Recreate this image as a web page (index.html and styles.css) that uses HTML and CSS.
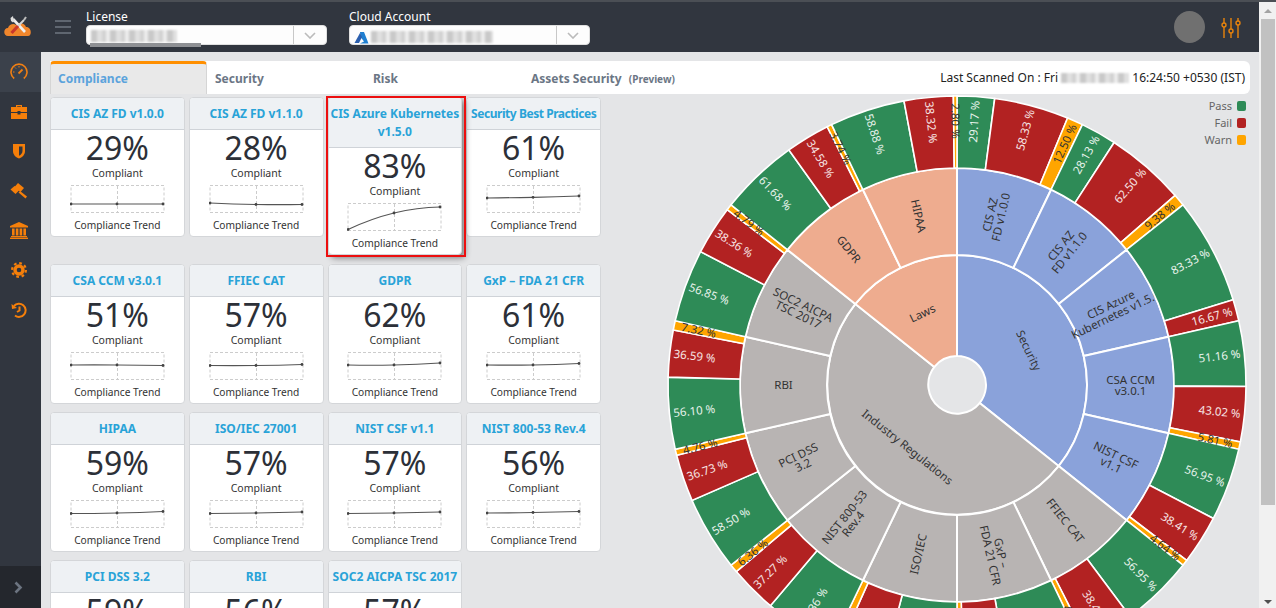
FILE: index.html
```html
<!DOCTYPE html>
<html lang="en">
<head>
    <meta charset="UTF-8">
    <meta name="viewport" content="width=device-width, initial-scale=1.0">
    <title>Compliance Dashboard</title>
    <link rel="stylesheet" href="styles.css">
</head>
<body>
    <div class="frame">
        <div class="header">
            <div class="logo">
                <svg width="28" height="22" viewBox="0 0 28 22">
                    <path d="M4 21 C-1 21 -1 13 4 13 C5 9 10 8 12 10 C15 7 21 8 22 12 C28 12 28 21 24 21 Z" fill="#f0862c"/>
                    <path d="M9 4 L21 17" stroke="#efefef" stroke-width="2.6"/>
                    <path d="M6.5 3 L9 1 L9.5 4 L11.5 5 L9 7.5 L7 6 Z" fill="#dedede"/>
                    <path d="M20 5 L13 12" stroke="#d5d5d5" stroke-width="2"/>
                    <path d="M14 11 L7.5 18" stroke="#c9372c" stroke-width="3.2"/>
                    <path d="M20 5 L22 2" stroke="#bdbdbd" stroke-width="2"/>
                </svg>
            </div>
            <div class="burger"><span></span><span></span><span></span></div>
            <div class="field license">
                <label>License</label>
                <div class="select">
                    <div class="select-value"><span class="redact redact-license"></span></div>
                    <div class="select-arrow"><svg width="12" height="7" viewBox="0 0 12 7"><path d="M1 1 L6 6 L11 1" fill="none" stroke="#bbb" stroke-width="1.6"/></svg></div>
                </div>
                <span class="redact-under"></span>
            </div>
            <div class="field account">
                <label>Cloud Account</label>
                <div class="select">
                    <div class="select-value">
                        <svg class="azure" width="15" height="12" viewBox="0 0 15 12"><path d="M6 0 L10 0 L14.5 11.5 L6 11.5 L10 9.5 L6.5 5 Z" fill="#1f7fd1"/><path d="M6 1 L0.5 11 L5 11 L8 5 Z" fill="#2b5fae"/></svg>
                        <span class="redact redact-account"></span>
                    </div>
                    <div class="select-arrow"><svg width="12" height="7" viewBox="0 0 12 7"><path d="M1 1 L6 6 L11 1" fill="none" stroke="#bbb" stroke-width="1.6"/></svg></div>
                </div>
            </div>
            <div class="header-right">
                <div class="avatar"></div>
                <svg width="20" height="20" viewBox="0 0 20 20" fill="none" stroke="#e8830c" stroke-width="1.4">
                    <path d="M3 0 V5 M3 9 V20 M10 0 V11 M10 15 V20 M17 0 V3 M17 7 V20"/>
                    <circle cx="3" cy="7" r="2"/><circle cx="10" cy="13" r="2"/><circle cx="17" cy="5" r="2"/>
                </svg>
            </div>
        </div>
        <div class="below">
            <div class="sidebar">
                <div class="side-item active">
                    <svg width="18" height="18" viewBox="0 0 18 18" fill="none" stroke="#f07f13" stroke-width="1.6"><path d="M4.2 15.5 A8 8 0 1 1 13.8 15.5"/><path d="M8.5 10.5 L12.5 6.5" stroke-width="1.8"/><path d="M3 9 H4.5 M5 4.5 L6 5.5 M9 3 V4.5" stroke-width="1"/></svg>
                </div>
                <div class="side-item">
                    <svg width="18" height="16" viewBox="0 0 18 16" fill="#f57f0a"><path d="M6 3 V1 H12 V3 H10.8 V2.2 H7.2 V3 Z"/><path d="M1 3 H17 V8 H10.5 V7 H7.5 V8 H1 Z"/><path d="M1 9 H7.5 V10.5 H10.5 V9 H17 V15 H1 Z"/></svg>
                </div>
                <div class="side-item">
                    <svg width="14" height="16" viewBox="0 0 14 16"><path d="M1 1 H13 V8 C13 12 10 14.5 7 15.5 C4 14.5 1 12 1 8 Z" fill="#f57f0a"/><path d="M7 3.5 H10.5 V8 C10.5 10 9 11.8 7 12.8 Z" fill="#31363f"/></svg>
                </div>
                <div class="side-item">
                    <svg width="18" height="17" viewBox="0 0 18 17" fill="#f57f0a"><path d="M8 1 L14 6 L10.5 10 L4.5 5 Z"/><path d="M1 8.5 L5 5 L10 9 L6 13 Z" transform="translate(-0.5 -1)"/><path d="M10 9 L17 14.5 L15.5 16.5 L8.5 10.5 Z"/></svg>
                </div>
                <div class="side-item">
                    <svg width="18" height="17" viewBox="0 0 18 17" fill="#f57f0a"><path d="M9 0 L18 4 V5.5 H0 V4 Z"/><rect x="2" y="6.5" width="2.6" height="7"/><rect x="5.8" y="6.5" width="2.6" height="7"/><rect x="9.6" y="6.5" width="2.6" height="7"/><rect x="13.4" y="6.5" width="2.6" height="7"/><rect x="1" y="14" width="16" height="1.2"/><rect x="0" y="15.6" width="18" height="1.4"/></svg>
                </div>
                <div class="side-item">
                    <svg width="16" height="16" viewBox="0 0 16 16"><circle cx="8" cy="8" r="6.9" fill="none" stroke="#f57f0a" stroke-width="2.2" stroke-dasharray="2.7 2.72"/><circle cx="8" cy="8" r="4" fill="none" stroke="#f57f0a" stroke-width="3.4"/></svg>
                </div>
                <div class="side-item">
                    <svg width="16" height="16" viewBox="0 0 16 16" fill="none" stroke="#f57f0a" stroke-width="2"><path d="M3 4 A6.6 6.6 0 1 1 4 13.5"/><path d="M8.5 4.5 V8.5 L6 10"/><path d="M0.5 2 L6 6 L1 7 Z" fill="#f57f0a" stroke="none"/></svg>
                </div>
                <div class="side-toggle">
                    <svg width="9" height="13" viewBox="0 0 9 13"><path d="M1.5 1.5 L6.5 6.5 L1.5 11.5" fill="none" stroke="#6c7480" stroke-width="2.6"/></svg>
                </div>
            </div>
            <div class="main">
                <div class="tabs">
                    <div class="tab active">Compliance</div>
                    <div class="tab">Security</div>
                    <div class="tab">Risk</div>
                    <div class="tab tab-wide">Assets Security <small>(Preview)</small></div>
                    <div class="scanned">Last Scanned On : Fri <span class="redact redact-date"></span> 16:24:50 +0530 (IST)</div>
                </div>
                <div class="content">
                    <div class="cards" id="cards"></div>
                    <div class="chart">
                        <svg id="sunburst" width="580" height="580" viewBox="-290 -289 580 580"></svg>
                        <div class="legend">
                            <div class="legend-row">Pass <i class="pass"></i></div>
                            <div class="legend-row">Fail <i class="fail"></i></div>
                            <div class="legend-row">Warn <i class="warn"></i></div>
                        </div>
                    </div>
                </div>
            </div>
        </div>
    </div>
    <div class="scrollbar">
        <div class="arrow-up"></div>
        <div class="thumb"></div>
        <div class="arrow-down"></div>
    </div>
    <script src="chart.js"></script>
</body>
</html>
```

FILE: styles.css
```css
* {
    box-sizing: border-box;
}
html, body {
    height: 100%;
}
body {
    font-family: "Noto Sans", "Open Sans", sans-serif;
    margin: 0;
    padding: 0;
    display: flex;
    overflow: hidden;
    background: #e4e5e7;
    color: #333;
    border-top: 2px solid #4b4f55;
}
.frame {
    flex: 1;
    min-width: 0;
    display: flex;
    flex-direction: column;
    overflow: hidden;
}
.header {
    height: 50px;
    flex-shrink: 0;
    background: #31363f;
    display: flex;
    color: #fff;
    position: relative;
}
.logo {
    width: 41px;
    padding: 13px 0 0 4px;
}
.burger {
    width: 45px;
    padding: 18px 0 0 14px;
}
.burger span {
    display: block;
    width: 16px;
    height: 2px;
    background: #5f6670;
    margin-bottom: 4px;
}
.field {
    width: 241px;
    position: relative;
}
.account {
    margin-left: 22px;
}
.field label {
    display: block;
    font-size: 12px;
    line-height: 14px;
    padding-top: 8px;
    height: 23px;
}
.select {
    height: 20px;
    background: #fdfdfd;
    border-radius: 4px;
    display: flex;
    border: 1px solid #e0e0e0;
}
.select-value {
    flex: 1;
    padding: 3px 0 0 4px;
    display: flex;
    align-items: flex-start;
}
.select-arrow {
    width: 33px;
    border-left: 1px solid #c8c8c8;
    display: flex;
    align-items: center;
    justify-content: center;
}
.azure {
    margin-top: 3px;
    margin-right: 2px;
}
.redact {
    display: inline-block;
    height: 12px;
    background: repeating-linear-gradient(90deg, #c9c9c9 0 6px, #e0e0e0 6px 11px, #d2d2d2 11px 15px, #ececec 15px 19px);
    filter: blur(0.8px);
}
.redact-license {
    width: 86px;
    margin-top: 1px;
}
.redact-account {
    width: 122px;
    margin-top: 2px;
}
.redact-date {
    width: 68px;
    height: 10px;
    vertical-align: -1px;
}
.redact-under {
    position: absolute;
    left: 4px;
    top: 41px;
    width: 111px;
    height: 4px;
    background: #8e9094;
}
.header-right {
    margin-left: auto;
    display: flex;
    align-items: flex-start;
    padding: 9px 18px 0 0;
}
.avatar {
    width: 31px;
    height: 32px;
    border-radius: 50%;
    background: #707070;
    margin-right: 16px;
}
.header-right svg {
    margin-top: 7px;
}
.below {
    flex: 1;
    display: flex;
    min-height: 0;
}
.sidebar {
    width: 41px;
    flex-shrink: 0;
    background: #31363f;
    display: flex;
    flex-direction: column;
    position: relative;
}
.side-item {
    height: 39.7px;
    padding-right: 4px;
    display: flex;
    align-items: center;
    justify-content: center;
}
.side-item.active {
    background: #3b414b;
}
.side-toggle {
    position: absolute;
    left: 0;
    right: 0;
    bottom: 0;
    height: 42px;
    padding-right: 4px;
    background: #24272d;
    display: flex;
    align-items: center;
    justify-content: center;
}
.main {
    flex: 1;
    min-width: 0;
    padding: 9px 9px 0 9px;
    overflow: hidden;
}
.tabs {
    height: 33px;
    background: #fff;
    border-radius: 0 6px 6px 0;
    display: flex;
    align-items: center;
    font-size: 12px;
    font-weight: bold;
    color: #6b7685;
}
.tab {
    width: 158px;
    height: 100%;
    padding: 9px 8px 0 8px;
    line-height: 17px;
    white-space: nowrap;
}
.tab.active {
    width: 157px;
    color: #5ba3dc;
    background: #e9e9e9;
    border-top: 3px solid #ff8f00;
    border-left: 1px solid #d5d5d5;
    border-right: 1px solid #d5d5d5;
    border-radius: 4px 4px 0 0;
    padding: 6px 0 0 7px;
}
.tab-wide {
    width: auto;
}
.tab-wide small {
    font-size: 10px;
    margin-left: 4px;
}
.scanned {
    margin-left: auto;
    padding-right: 5px;
    font-weight: normal;
    font-size: 12px;
    color: #222;
}
.content {
    display: flex;
    align-items: flex-start;
}
.cards {
    width: 551px;
    flex-shrink: 0;
    display: grid;
    grid-template-columns: repeat(4, minmax(0, 1fr));
    column-gap: 4px;
    row-gap: 8px;
    align-items: start;
    padding-top: 3px;
}
.card {
    background: #fff;
    border: 1px solid #d4d6d9;
    border-radius: 4px;
    text-align: center;
}
.card.flagged {
    position: relative;
    box-shadow: 3px 3px 6px rgba(0, 0, 0, 0.45);
    margin-bottom: 1px;
    z-index: 1;
}
/* red box drawn over the card */
.card.flagged::after {
    content: "";
    position: absolute;
    left: -3px;
    right: -5px;
    top: -2px;
    bottom: -3px;
    border: 2px solid #ec0f0f;
}
.card-title {
    background: #eef1f4;
    border-bottom: 1px solid #cfd3d8;
    border-radius: 3px 3px 0 0;
    color: #29a3d8;
    font-size: 12px;
    font-weight: bold;
    line-height: 18px;
    padding: 7px 0 6px;
    white-space: pre;
}
.card-title.tight {
    letter-spacing: -0.45px;
}
.card-pct {
    font-size: 32px;
    line-height: 35px;
    color: #2c3038;
}
.card-sub {
    font-size: 10.5px;
    line-height: 14px;
    margin-top: 1px;
}
.spark {
    display: block;
    margin: 5px auto;
}
.card-foot {
    font-size: 10.2px;
    line-height: 14px;
    padding-bottom: 4px;
}
.chart {
    margin-left: 66px;
    padding-top: 2px;
    position: relative;
}
#sunburst {
    display: block;
    overflow: visible;
}
#sunburst text {
    font-family: "Noto Sans", "Open Sans", sans-serif;
    font-size: 11.5px;
    text-anchor: middle;
}
.legend {
    position: absolute;
    top: 3px;
    right: 1px;
    font-size: 11px;
    color: #666;
}
.legend-row {
    height: 17px;
    display: flex;
    justify-content: flex-end;
    align-items: center;
}
.legend-row i {
    width: 9px;
    height: 10px;
    border-radius: 2px;
    margin-left: 5px;
}
.pass { background: #2e8b57; }
.fail { background: #b22222; }
.warn { background: #ffa500; }
.scrollbar {
    width: 17px;
    flex-shrink: 0;
    background: #f1f1f1;
    display: flex;
    flex-direction: column;
    align-items: center;
    padding-top: 7px;
    position: relative;
}
.arrow-up {
    border: 4px solid transparent;
    border-bottom: 4px solid #a3a3a3;
    border-top: 0;
}
.thumb {
    width: 14px;
    height: 486px;
    margin-top: 6px;
    background: #c1c1c1;
}
.arrow-down {
    position: absolute;
    bottom: 4px;
    border: 4px solid transparent;
    border-top: 4px solid #505050;
    border-bottom: 0;
}
```

FILE: chart.js
```js
// cards on the left
const cards = [
    { t: 'CIS AZ FD v1.0.0', v: 29, p: [19, 19, 19] },
    { t: 'CIS AZ FD v1.1.0', v: 28, p: [18, 19.5, 19.5] },
    { t: 'CIS Azure Kubernetes\nv1.5.0', v: 83, p: [26.5, 10, 4], flagged: true },
    { t: 'Security Best Practices', v: 61, p: [13, 12.3, 11], tight: true },
    { t: 'CSA CCM v3.0.1', v: 51, p: [13, 13, 13.5] },
    { t: 'FFIEC CAT', v: 57, p: [13.5, 13.5, 12.5] },
    { t: 'GDPR', v: 62, p: [13, 13, 11] },
    { t: 'GxP \u2013 FDA 21 CFR', v: 61, p: [13, 13, 11.5] },
    { t: 'HIPAA', v: 59, p: [13.5, 13, 11.5] },
    { t: 'ISO/IEC 27001', v: 57, p: [13.5, 13, 12] },
    { t: 'NIST CSF v1.1', v: 57, p: [13.5, 13, 12] },
    { t: 'NIST 800-53 Rev.4', v: 56, p: [13, 12.5, 11.5] },
    { t: 'PCI DSS 3.2', v: 59, p: [13, 13, 12] },
    { t: 'RBI', v: 56, p: [13, 13, 12] },
    { t: 'SOC2 AICPA TSC 2017', v: 57, p: [13, 13, 12] }
];

function spark(p) {
    let xs = [1, 47, 93];
    let dots = xs.map((x, i) => `<circle cx="${x}" cy="${p[i]}" r="1.4" fill="#444"/>`).join('');
    // smoothed line through the three points, slope at the middle one is the average
    let s = (p[2] - p[0]) / 4;
    let line = `M1 ${p[0]} Q24 ${p[1] - s} 47 ${p[1]} Q70 ${p[1] + s} 93 ${p[2]}`;
    return `<svg class="spark" width="95" height="28" viewBox="0 0 95 28">
        <path d="M1 .5H94V27.5H1ZM47.5 1V27" fill="none" stroke="#ccc" stroke-dasharray="3 2"/>
        <path d="${line}" fill="none" stroke="#555" stroke-width="1.2"/>${dots}</svg>`;
}

document.getElementById('cards').innerHTML = cards.map(c => `
    <div class="card${c.flagged ? ' flagged' : ''}">
        <div class="card-title${c.tight ? ' tight' : ''}">${c.t}</div>
        <div class="card-pct">${c.v}%</div>
        <div class="card-sub">Compliant</div>
        ${spark(c.p)}
        <div class="card-foot">Compliance Trend</div>
    </div>`).join('');

// sunburst on the right
const R0 = 29, R1 = 130, R2 = 217, R3 = 289;
const LABEL_R = 264;
const GREEN = '#2e8b57', RED = '#b22222', ORANGE = '#ffa500';
const BLUE = '#8aa2da', SALMON = '#eeac8f', GREY = '#b8b4b3';
const STEP = 360 / 14;

const groups = [
    ['Security', 5, BLUE],
    ['Industry Regulations', 7, GREY],
    ['Laws', 2, SALMON]
];
const sectors = [
    ['CIS AZ\nFD v1.0.0', 29.17, 58.33, 12.50],
    ['CIS AZ\nFD v1.1.0', 28.13, 62.50, 9.38],
    ['CIS Azure\nKubernetes v1.5.0', 83.33, 16.67, 0],
    ['CSA CCM\nv3.0.1', 51.16, 43.02, 5.81],
    ['NIST CSF\nv1.1', 56.95, 38.41, 4.64],
    ['FFIEC CAT', 56.95, 38.41, 4.64],
    ['GxP \u2013\nFDA 21 CFR', 60.86, 34.78, 4.36],
    ['ISO/IEC', 56.86, 37.25, 5.89],
    ['NIST 800-53\nRev.4', 56.36, 37.27, 6.36],
    ['PCI DSS\n3.2', 58.50, 36.73, 4.76],
    ['RBI', 56.10, 36.59, 7.32],
    ['SOC2 AICPA\nTSC 2017', 56.85, 38.36, 4.79],
    ['GDPR', 61.68, 34.58, 3.74],
    ['HIPAA', 58.88, 38.32, 2.80]
];

function pt(r, a) {
    let t = a * Math.PI / 180;
    return (r * Math.sin(t)).toFixed(2) + ' ' + (-r * Math.cos(t)).toFixed(2);
}

function arc(r1, r2, a1, a2, fill, sw) {
    let big = a2 - a1 > 180 ? 1 : 0;
    return `<path d="M${pt(r1, a1)} L${pt(r2, a1)} A${r2} ${r2} 0 ${big} 1 ${pt(r2, a2)} L${pt(r1, a2)} A${r1} ${r1} 0 ${big} 0 ${pt(r1, a1)} Z" fill="${fill}" stroke="#fff" stroke-width="${sw}"/>`;
}

function label(txt, r, a, tangential, color) {
    let t = a * Math.PI / 180;
    let x = r * Math.sin(t), y = -r * Math.cos(t);
    let rot;
    if (tangential) {
        rot = a > 90 && a < 270 ? a - 180 : a;
    } else {
        rot = a < 180 ? a - 90 : a - 270;
    }
    let lines = txt.split('\n');
    let spans = lines.map((l, i) => {
        let dy = (i - (lines.length - 1) / 2) * 11 + 4;
        return `<tspan x="0" y="${dy}">${l}</tspan>`;
    }).join('');
    return `<text transform="translate(${x.toFixed(2)} ${y.toFixed(2)}) rotate(${rot.toFixed(2)})" fill="${color}">${spans}</text>`;
}

let svg = '';
let a = 0;
groups.forEach(g => {
    let end = a + g[1] * STEP;
    svg += arc(R0, R1, a, end, g[2], 2);
    svg += label(g[0], (R0 + R1) / 2, (a + end) / 2, true, '#333');
    for (let i = 0; i < g[1]; i++) {
        svg += arc(R1, R2, a + i * STEP, a + (i + 1) * STEP, g[2], 2);
    }
    a = end;
});

sectors.forEach((s, i) => {
    let start = i * STEP;
    svg += label(s[0], (R1 + R2) / 2, start + STEP / 2, false, '#333');
    let cur = start;
    [[s[1], GREEN], [s[2], RED], [s[3], ORANGE]].forEach(p => {
        if (!p[0]) return;
        let next = cur + STEP * p[0] / (s[1] + s[2] + s[3]);
        svg += arc(R2, R3, cur, next, p[1], 1.6);
        cur = next;
    });
});

// labels go after all the slices, the thin warn ones spill over
sectors.forEach((s, i) => {
    let cur = i * STEP;
    [[s[1], '#e8f3ec'], [s[2], '#f7e4e4'], [s[3], '#333']].forEach(p => {
        if (!p[0]) return;
        let next = cur + STEP * p[0] / (s[1] + s[2] + s[3]);
        svg += label(p[0].toFixed(2) + ' %', LABEL_R, (cur + next) / 2, false, p[1]);
        cur = next;
    });
});

document.getElementById('sunburst').innerHTML = svg;
```
